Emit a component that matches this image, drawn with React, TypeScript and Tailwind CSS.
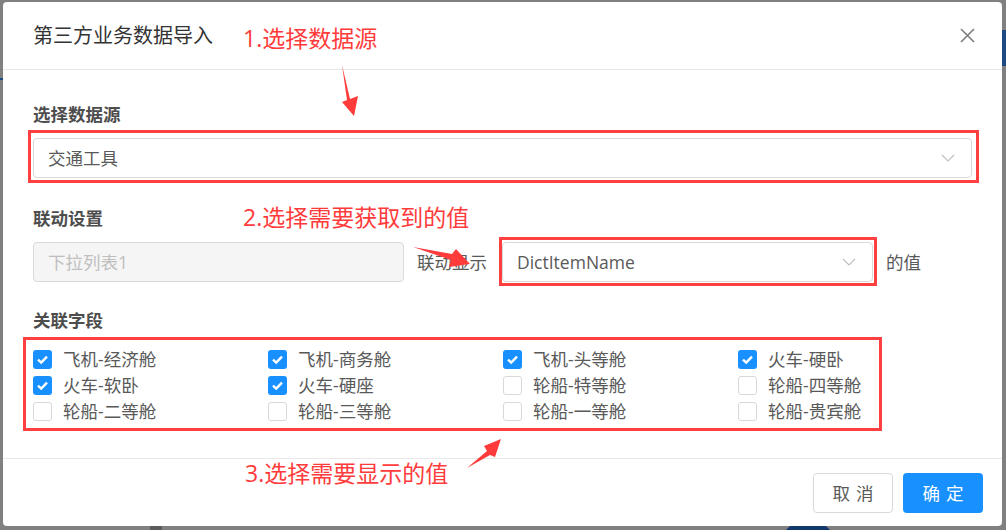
import { useState } from 'react';

const FONT = '"Open Sans", "Noto Sans CJK SC", sans-serif';

interface FieldOption {
  label: string;
  checked: boolean;
}

const FIELDS: FieldOption[] = [
  { label: '飞机-经济舱', checked: true },
  { label: '飞机-商务舱', checked: true },
  { label: '飞机-头等舱', checked: true },
  { label: '火车-硬卧', checked: true },
  { label: '火车-软卧', checked: true },
  { label: '火车-硬座', checked: true },
  { label: '轮船-特等舱', checked: false },
  { label: '轮船-四等舱', checked: false },
  { label: '轮船-二等舱', checked: false },
  { label: '轮船-三等舱', checked: false },
  { label: '轮船-一等舱', checked: false },
  { label: '轮船-贵宾舱', checked: false },
];

function Chevron() {
  return (
    <svg width="14" height="8" viewBox="0 0 14 8" fill="none">
      <path d="M1 1L7 7L13 1" stroke="#bfbfbf" strokeWidth="1.2" />
    </svg>
  );
}

function SelectBox({ value, className }: { value: string; className?: string }) {
  return (
    <div
      className={`flex h-[40px] items-center justify-between rounded-[4px] border border-[#d9d9d9] bg-white pl-[14px] pr-[16px] text-[17.5px] text-[#595959] ${className ?? ''}`}
    >
      <span>{value}</span>
      <Chevron />
    </div>
  );
}

function Checkbox({ label, checked, onToggle }: FieldOption & { onToggle: () => void }) {
  return (
    <label className="flex h-[26px] cursor-pointer items-center" onClick={onToggle}>
      {checked ? (
        <span className="flex h-[19px] w-[19px] items-center justify-center rounded-[3px] bg-[#1890ff]">
          <svg width="19" height="19" viewBox="0 0 19 19" fill="none">
            <path d="M5 9.6L8.2 12.6L14 6.6" stroke="#fff" strokeWidth="2.4" />
          </svg>
        </span>
      ) : (
        <span className="h-[19px] w-[19px] rounded-[3px] border border-[#d9d9d9] bg-white" />
      )}
      <span className="ml-[11px] text-[17.5px] text-[#595959]">{label}</span>
    </label>
  );
}

export default function App() {
  const [fields, setFields] = useState(FIELDS);

  function toggle(i: number) {
    setFields((prev) => prev.map((f, j) => (j === i ? { ...f, checked: !f.checked } : f)));
  }

  return (
    <div
      className="relative h-[530px] w-[1006px] overflow-hidden bg-[#808080] pl-[3px] pt-[2px]"
      style={{ fontFamily: FONT }}
    >
      {/* page behind the mask */}
      <div className="absolute right-0 top-[30px] h-[36px] w-[4px] bg-[#1d4a85]" />
      <div className="absolute left-0 top-[78px] h-[2px] w-[3px] bg-[#1d4a85]" />
      <div className="absolute left-[150px] top-[526px] h-[4px] w-[12px] bg-[#5c5c5c]" />
      <div className="absolute left-[783px] top-[524px] h-[30px] w-[50px] rounded-full bg-[#12376b]" />

      {/* modal */}
      <div className="relative flex h-[524px] w-[999px] flex-col rounded-[4px] bg-white">
        <div className="flex h-[68px] items-center justify-between border-b border-[#e8e8e8] pl-[30px]">
          <span className="text-[20px] text-[#333]">第三方业务数据导入</span>
          <button type="button" aria-label="关闭" className="flex h-full w-[70px] items-center justify-center">
            <svg width="15" height="15" viewBox="0 0 15 15" fill="none">
              <path d="M1 1L14 14M14 1L1 14" stroke="#7d7d7d" strokeWidth="1.6" />
            </svg>
          </button>
        </div>

        <div className="flex-1 px-[30px] pt-[30px]">
          <div className="h-[28px] text-[17.5px] font-bold leading-[28px] text-[#4d4d4d]">选择数据源</div>
          <SelectBox value="交通工具" className="mt-[10px] w-full" />

          <div className="mt-[26px] h-[28px] text-[17.5px] font-bold leading-[28px] text-[#4d4d4d]">联动设置</div>
          <div className="mt-[10px] flex items-center">
            <div className="flex h-[40px] w-[371px] items-center rounded-[4px] border border-[#d9d9d9] bg-[#f5f5f5] pl-[14px] text-[17.5px] text-[#bfbfbf]">
              下拉列表1
            </div>
            <span className="ml-[13px] text-[17.5px] text-[#595959]">联动显示</span>
            <SelectBox value="DictItemName" className="ml-[15px] w-[371px]" />
            <span className="ml-[13px] text-[17.5px] text-[#595959]">的值</span>
          </div>

          <div className="mt-[24px] h-[28px] text-[17.5px] font-bold leading-[28px] text-[#4d4d4d]">关联字段</div>
          <div className="mt-[12px] grid grid-cols-[235px_235px_235px_235px]">
            {fields.map((f, i) => (
              <Checkbox key={f.label} {...f} onToggle={() => toggle(i)} />
            ))}
          </div>
        </div>

        <div className="flex h-[68px] items-start justify-end gap-[10px] border-t border-[#e8e8e8] pr-[19px] pt-[14px]">
          <button
            type="button"
            className="flex h-[40px] w-[80px] items-center justify-center rounded-[4px] border border-[#d9d9d9] bg-white text-[17.5px] text-[#595959]"
          >
            <span className="mr-[-0.34em] tracking-[0.34em]">取消</span>
          </button>
          <button
            type="button"
            className="flex h-[40px] w-[80px] items-center justify-center rounded-[4px] bg-[#1890ff] text-[17.5px] text-white"
          >
            <span className="mr-[-0.34em] tracking-[0.34em]">确定</span>
          </button>
        </div>
      </div>

      {/* annotations */}
      <div className="pointer-events-none absolute left-[28px] top-[130px] h-[53px] w-[951px] border-[3px] border-[#ff4040]" />
      <div className="pointer-events-none absolute left-[499px] top-[237px] h-[49px] w-[378px] border-[3px] border-[#ff4040]" />
      <div className="pointer-events-none absolute left-[23px] top-[337px] h-[94px] w-[859px] border-[3px] border-[#ff4040]" />

      <span className="absolute left-[243px] top-[26px] text-[23px] leading-[24px] text-[#ff3b3b]">1.选择数据源</span>
      <span className="absolute left-[243px] top-[205px] text-[23px] leading-[24px] text-[#ff3b3b]">2.选择需要获取到的值</span>
      <span className="absolute left-[245px] top-[461px] text-[23px] leading-[24px] text-[#ff3b3b]">3.选择需要显示的值</span>

      <svg className="pointer-events-none absolute left-0 top-0" width="1006" height="530" viewBox="0 0 1006 530">
        <polygon points="342,65 350,99 358,96 354,116 342,102 347,100" fill="#ff3b3b" />
        <polygon points="413,247 452,254 456,249 470,264 449,267 451,260" fill="#ff3b3b" />
        <polygon points="467,468 487,451 484,446 501,439 495,457 490,455" fill="#ff3b3b" />
      </svg>
    </div>
  );
}
